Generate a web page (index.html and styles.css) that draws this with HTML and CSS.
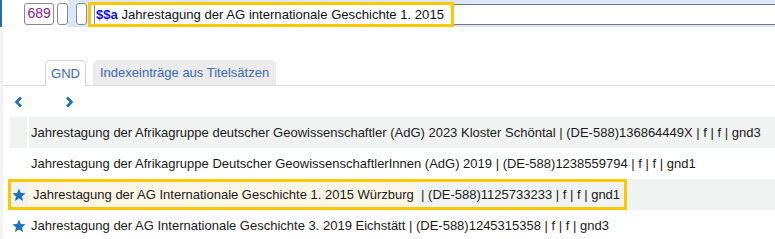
FILE: index.html
```html
<!DOCTYPE html>
<html lang="de">
<head>
<meta charset="utf-8">
<link rel="stylesheet" href="styles.css">
</head>
<body>
<div class="header">
  <div class="header-left">
    <div class="tagbox">689</div>
    <div class="smallbox"></div>
  </div>
  <div class="header-right">
    <div class="smallbox"></div>
    <div class="field">
      <div class="hl-field"><span class="input-text"><b class="sub">$$a</b> Jahrestagung der AG internationale Geschichte 1. 2015</span></div>
    </div>
  </div>
</div>
<div class="main">
  <div class="tabs">
    <div class="tab active">GND</div>
    <div class="tab">Indexeinträge aus Titelsätzen</div>
  </div>
  <div class="nav">
    <svg class="chev" width="10" height="12" viewBox="0 0 10 12"><polyline points="7,1.5 2.5,6 7,10.5" fill="none" stroke="#1a6fb5" stroke-width="2.6"/></svg>
    <svg class="chev" width="10" height="12" viewBox="0 0 10 12"><polyline points="3,1.5 7.5,6 3,10.5" fill="none" stroke="#1a6fb5" stroke-width="2.6"/></svg>
  </div>
  <div class="table">
    <div class="row gray">
      <div class="icon"></div>
      <div class="text">Jahrestagung der Afrikagruppe deutscher Geowissenschaftler (AdG) 2023 Kloster Schöntal | (DE-588)136864449X | f | f | gnd3</div>
    </div>
    <div class="row">
      <div class="icon"></div>
      <div class="text">Jahrestagung der Afrikagruppe Deutscher GeowissenschaftlerInnen (AdG) 2019 | (DE-588)1238559794 | f | f | gnd1</div>
    </div>
    <div class="row gray">
      <div class="hl-row">
        <div class="icon sel"><svg width="14" height="14" viewBox="0 0 24 24"><path d="M12 1l3.2 7.5 8.1.6-6.2 5.3 2 7.9L12 18l-7.1 4.3 2-7.9-6.2-5.3 8.1-.6z" fill="#1e73be"/></svg></div>
        <div class="text sel-text"><span class="cream">Jahrestagung der AG Internationale Geschichte 1. 2015 Würzburg </span> | (DE-588)1125733233 | f | f | gnd1</div>
      </div>
    </div>
    <div class="row">
      <div class="icon"><svg width="14" height="14" viewBox="0 0 24 24"><path d="M12 1l3.2 7.5 8.1.6-6.2 5.3 2 7.9L12 18l-7.1 4.3 2-7.9-6.2-5.3 8.1-.6z" fill="#1e73be"/></svg></div>
      <div class="text">Jahrestagung der AG Internationale Geschichte 3. 2019 Eichstätt | (DE-588)1245315358 | f | f | gnd3</div>
    </div>
  </div>
</div>
</body>
</html>
```
FILE: styles.css
```css
html, body {
  margin: 0;
  padding: 0;
  background: #fff;
  font-family: "Liberation Sans", Arial, sans-serif;
  font-size: 13px;
  color: #1a1a1a;
  overflow: hidden;
}
.header {
  display: flex;
  height: 27px;
  border-left: 2px solid #1f6fb5;
}
.header-left {
  width: 66px;
  background: #fff;
  display: flex;
  align-items: center;
  padding-left: 22px;
  box-sizing: border-box;
  gap: 3px;
}
.tagbox {
  width: 31px;
  height: 22px;
  box-sizing: border-box;
  border: 1px solid #8a8a8a;
  border-radius: 3px;
  color: #8b1a8b;
  font-size: 14px;
  display: flex;
  align-items: center;
  justify-content: center;
  padding-bottom: 1px;
}
.smallbox {
  width: 11px;
  height: 22px;
  box-sizing: border-box;
  border: 1px solid #8a8a8a;
  border-radius: 3px;
  background: #fff;
}
.header-right {
  flex: 1;
  background: #dce8f8;
  display: flex;
  align-items: center;
  padding-left: 8px;
}
.field {
  flex: 1;
  margin-left: 4px;
  height: 21px;
  box-sizing: border-box;
  border-top: 1px solid #777;
  border-bottom: 1px solid #777;
  background: #fff;
  display: flex;
  align-items: stretch;
  margin-top: 1px;
}
.hl-field {
  width: 357px;
  outline: 3px solid #fcc800;
  padding-left: 3px;
  display: flex;
  align-items: stretch;
}
.input-text {
  border-left: 1px solid #7d8fa8;
  padding-left: 1px;
  display: flex;
  align-items: center;
  white-space: pre;
  color: #111;
  font-size: 13.1px;
}
.sub {
  color: #1010ee;
}
.main {
  border-left: 3px solid #f3f3f3;
  height: 212px;
  overflow: hidden;
}
.tabs {
  display: flex;
  gap: 7px;
  margin-top: 33px;
  padding-left: 42px;
  border-bottom: 1px solid #dcdcdc;
  height: 25px;
}
.tab {
  height: 25px;
  box-sizing: border-box;
  padding: 0 7px;
  border-radius: 5px 5px 0 0;
  background: #ececec;
  color: #3a68b2;
  display: flex;
  align-items: center;
  font-size: 13px;
}
.tab.active {
  width: 41px;
  justify-content: center;
  padding: 0;
  background: #fff;
  border: 1px solid #d4d4d4;
  border-bottom: none;
  height: 26px;
  margin-bottom: -1px;
}
.nav {
  display: flex;
  align-items: center;
  height: 31px;
  padding-left: 11px;
  gap: 40px;
}
.table {
  padding-left: 7px;
}
.row {
  display: flex;
  height: 31px;
  gap: 2px;
}
.row.gray {
  background: #f1f3f3;
}
.row:not(.gray) {
  background: #fff;
}
.icon {
  width: 17px;
  flex: none;
  display: flex;
  align-items: center;
  justify-content: center;
}
.text {
  display: flex;
  align-items: center;
  padding-left: 2px;
  white-space: pre;
}
.row.gray .icon {
  background: #f1f3f3;
}
.row.gray > .text {
  flex: 1;
  background: #f1f3f3;
  box-shadow: -2px 0 0 #fff;
}
.hl-row {
  display: flex;
  margin: 3px 0 3px 1px;
  outline: 3px solid #fcc800;
  gap: 1px;
}
.icon.sel {
  width: 16px;
  background: #edf1f5;
}
.sel-text {
  padding-left: 0;
  padding-right: 4px;
  background: #f1f3f3;
}
.cream {
  background: #fcf6e6;
  align-self: stretch;
  display: flex;
  align-items: center;
  padding-left: 5px;
}
```
